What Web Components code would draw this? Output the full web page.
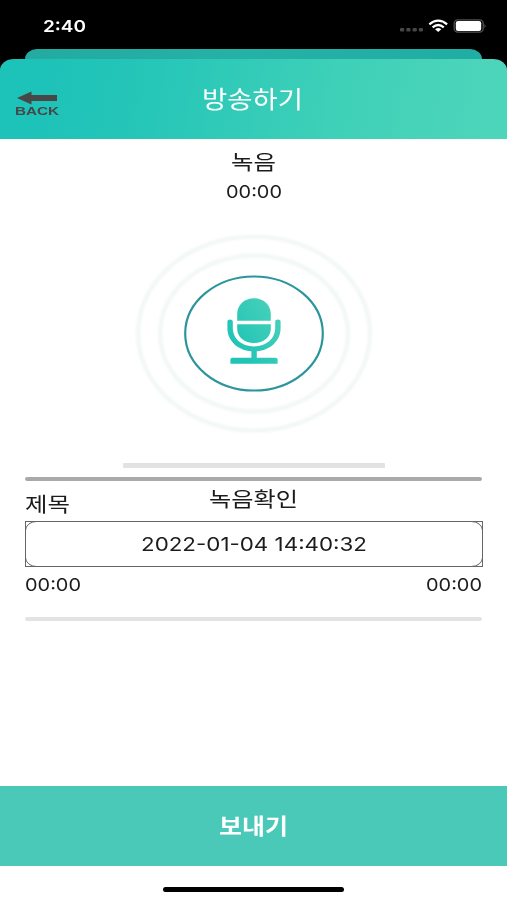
<!DOCTYPE html>
<html lang="ko">
<head>
<meta charset="utf-8">
<title>방송하기</title>
<style>
  body {
    margin: 0;
    background: #fff;
    color: #1c1c1c;
    font-family: Inter, "Noto Sans CJK KR", sans-serif;
  }
</style>
</head>
<body>
<broadcast-page></broadcast-page>

<script>
// one line of text, widened to the given width
class WideText extends HTMLElement {
  constructor() {
    super();
    const shadowRoot = this.attachShadow({mode: 'open'});
    shadowRoot.innerHTML = `
  <style>
    :host {
      display: block;
      flex: none;
      white-space: nowrap;
    }
    span {
      display: inline-block;
      transform-origin: 0 50%;
    }
  </style>
  <span><slot></slot></span>
`;
  }

  connectedCallback() {
    this.fit();
    document.fonts.ready.then(() => this.fit());
  }

  fit() {
    const span = this.shadowRoot.querySelector('span');
    const width = Number(this.getAttribute('width'));
    this.style.width = width + 'px';
    span.style.transform = 'none';
    const natural = span.getBoundingClientRect().width;
    if (natural) {
      span.style.transform = `scaleX(${width / natural})`;
    }
  }
}

class StatusBar extends HTMLElement {
  constructor() {
    super();
    const shadowRoot = this.attachShadow({mode: 'open'});
    shadowRoot.innerHTML = `
  <style>
    :host {
      display: flex;
      justify-content: space-between;
      box-sizing: border-box;
      height: 49px;
      padding: 16px 20px 0 43px;
      color: #fff;
      font-size: 16.5px;
      font-weight: 600;
      line-height: 20px;
    }
    svg {
      display: block;
    }
  </style>
  <wide-text width="43"><slot></slot></wide-text>
  <svg width="88" height="20" viewBox="399 16 88 20">
    <g fill="#474747">
      <rect x="400" y="28" width="4.2" height="3.4" rx="1"/>
      <rect x="406.3" y="28" width="4.2" height="3.4" rx="1"/>
      <rect x="412.6" y="28" width="4.2" height="3.4" rx="1"/>
      <rect x="418.8" y="28" width="4.2" height="3.4" rx="1"/>
    </g>
    <g fill="none" stroke="#fff" stroke-width="2.3">
      <path d="M429.3 24.3Q438.2 17 447.1 24.3"/>
      <path d="M432.6 27.3Q438.2 22.6 443.8 27.3"/>
    </g>
    <path d="M435.1 29.3Q438.2 26.9 441.3 29.3L438.2 32Z" fill="#fff"/>
    <rect x="454.2" y="19.8" width="29" height="12.4" rx="3.6" fill="none" stroke="#505050" stroke-width="1.3"/>
    <rect x="455.8" y="21.1" width="25.4" height="9.8" rx="2.2" fill="#fff"/>
    <path d="M484.5 24Q486.5 26 484.5 28Z" fill="#666"/>
  </svg>
`;
  }
}

class NavHeader extends HTMLElement {
  constructor() {
    super();
    const shadowRoot = this.attachShadow({mode: 'open'});
    shadowRoot.innerHTML = `
  <style>
    :host {
      display: grid;
      grid-template-columns: 1fr auto 1fr;
      align-items: center;
      height: 80px;
      border-radius: 14px 14px 0 0 / 11px 11px 0 0;
      background: linear-gradient(100deg, #1dc2b8 8%, #26c6b8 30%, #3ed0b8 65%, #4cd5bb 95%);
      color: #fff;
      font-size: 24px;
      line-height: 36px;
    }
    .back {
      padding: 10px 0 0 15px;
      color: #474747;
      font: bold 11.5px/12px "Liberation Sans", sans-serif;
    }
    .back svg {
      display: block;
      margin-left: 2px;
    }
    .title {
      margin: 1px 2px 0 0;
    }
  </style>
  <div class="back">
    <svg width="42" height="14" viewBox="0 0 42 14"><path d="M0 7L14.5 .5V4H40V10H14.5V13.5Z" fill="#474747"/></svg>
    <wide-text width="44">BACK</wide-text>
  </div>
  <wide-text class="title" width="101"><slot></slot></wide-text>
`;
  }
}

class MicButton extends HTMLElement {
  constructor() {
    super();
    const shadowRoot = this.attachShadow({mode: 'open'});
    shadowRoot.innerHTML = `
  <style>
    :host {
      display: block;
      height: 224px;
    }
    svg {
      display: block;
      margin: 0 auto;
    }
  </style>
  <svg width="254" height="224" viewBox="127 221 254 224">
    <defs>
      <linearGradient id="teal" gradientUnits="userSpaceOnUse" x1="235" y1="345" x2="278" y2="315">
        <stop offset="0" stop-color="#20c4b7"/>
        <stop offset="1" stop-color="#46d0b8"/>
      </linearGradient>
      <filter id="soft" x="-10%" y="-10%" width="120%" height="120%">
        <feGaussianBlur stdDeviation="1.4"/>
      </filter>
    </defs>
    <g fill="none" stroke="#eff6f5" stroke-width="3.6" filter="url(#soft)">
      <ellipse cx="254" cy="333.5" rx="116" ry="97"/>
      <ellipse cx="254" cy="333.5" rx="94" ry="78"/>
    </g>
    <ellipse cx="254" cy="333.5" rx="68.8" ry="57" fill="#fff" stroke="#2c959b" stroke-width="2.2"/>
    <g fill="url(#teal)">
      <path d="M237.2 320.8V314C237.2 305 244.5 298.3 254 298.3S270.8 305 270.8 314V320.8Z"/>
      <path d="M237.2 324.2H270.8V329C270.8 337 263.5 343 254 343S237.2 337 237.2 329Z"/>
      <path d="M227.4 321.3Q227.4 319.5 230 319.5T232.8 321.3V328C232.8 338.5 241.5 346.4 254 346.4S275.2 338.5 275.2 328V321.3Q275.2 319.5 277.9 319.5T280.6 321.3V328C280.6 341 270 350.4 256.8 351.3V357.7H275.5Q277.6 357.7 277.6 359.5V363.8H230.4V359.5Q230.4 357.7 232.5 357.7H251.4V351.3C238 350.4 227.4 341 227.4 328Z"/>
    </g>
  </svg>
`;
  }
}

class ProgressTrack extends HTMLElement {
  constructor() {
    super();
    const shadowRoot = this.attachShadow({mode: 'open'});
    shadowRoot.innerHTML = `
  <style>
    :host {
      display: block;
      height: 4px;
      border-radius: 2px;
      background: #e3e3e3;
    }
  </style>
`;
  }
}

class TitleField extends HTMLElement {
  constructor() {
    super();
    const shadowRoot = this.attachShadow({mode: 'open'});
    shadowRoot.innerHTML = `
  <style>
    :host {
      display: grid;
      height: 46px;
      font-size: 19px;
      line-height: 28px;
    }
    svg, wide-text {
      grid-area: 1 / 1;
    }
    wide-text {
      place-self: center;
      padding-top: 2px;
    }
  </style>
  <svg width="458" height="46" fill="none" stroke="#666">
    <rect x=".5" y=".5" width="457" height="45"/>
    <rect x=".5" y=".5" width="457" height="45" rx="11" ry="9"/>
  </svg>
  <wide-text width="226"><slot></slot></wide-text>
`;
  }
}

class BroadcastPage extends HTMLElement {
  constructor() {
    super();
    const shadowRoot = this.attachShadow({mode: 'open'});
    shadowRoot.innerHTML = `
  <style>
    :host {
      display: flex;
      flex-direction: column;
      height: 900px;
      overflow: hidden;
    }
    .top {
      background: #000;
    }
    .behind {
      height: 10px;
      margin: 0 25px;
      border-radius: 12px 12px 0 0 / 10px 10px 0 0;
      background: linear-gradient(90deg, #24aaa1, #26b1a7 50%, #20ada4);
    }
    .record {
      display: flex;
      flex-direction: column;
      align-items: center;
      height: 338px;
    }
    .label {
      font-size: 20.5px;
      line-height: 30px;
    }
    .time {
      font-size: 17px;
      line-height: 24px;
    }
    .record .label {
      margin-top: 9px;
    }
    .record .time {
      margin-top: 2px;
    }
    mic-button {
      margin-top: 17px;
    }
    .record progress-track {
      width: 262px;
      height: 5px;
      margin-top: 18px;
      border-radius: 1px;
      background: #e2e2e2;
    }
    .check {
      margin: 0 25px;
    }
    .line {
      height: 4px;
      border-radius: 2px;
      background: #a9a9a9;
    }
    .heading {
      display: grid;
      grid-template-columns: 1fr auto 1fr;
      height: 40px;
    }
    .heading .label:first-child {
      margin-top: 9px;
    }
    .heading .label:last-child {
      margin-top: 4px;
    }
    .times {
      display: flex;
      justify-content: space-between;
      box-sizing: border-box;
      height: 50px;
      padding: 6px 0 0;
    }
    .send {
      display: flex;
      align-items: center;
      justify-content: center;
      height: 80px;
      margin-top: auto;
      background: #4ac9b9;
      color: #fff;
      font-size: 22px;
      font-weight: 700;
      line-height: 32px;
    }
    .home {
      width: 181px;
      height: 5px;
      margin: 21px auto 8px;
      border-radius: 3px;
      background: #000;
    }
  </style>
  <div class="top">
    <status-bar>2:40</status-bar>
    <div class="behind"></div>
    <nav-header>방송하기</nav-header>
  </div>
  <div class="record">
    <wide-text class="label" width="45">녹음</wide-text>
    <wide-text class="time" width="56">00:00</wide-text>
    <mic-button></mic-button>
    <progress-track></progress-track>
  </div>
  <div class="check">
    <div class="line"></div>
    <div class="heading">
      <wide-text class="label" width="45">제목</wide-text>
      <wide-text class="label" width="89">녹음확인</wide-text>
    </div>
    <title-field>2022-01-04 14:40:32</title-field>
    <div class="times">
      <wide-text class="time" width="56">00:00</wide-text>
      <wide-text class="time" width="56">00:00</wide-text>
    </div>
    <progress-track></progress-track>
  </div>
  <div class="send"><wide-text width="69">보내기</wide-text></div>
  <div class="home"></div>
`;
  }
}

window.customElements.define('wide-text', WideText);
window.customElements.define('status-bar', StatusBar);
window.customElements.define('nav-header', NavHeader);
window.customElements.define('mic-button', MicButton);
window.customElements.define('progress-track', ProgressTrack);
window.customElements.define('title-field', TitleField);
window.customElements.define('broadcast-page', BroadcastPage);
</script>
</body>
</html>
